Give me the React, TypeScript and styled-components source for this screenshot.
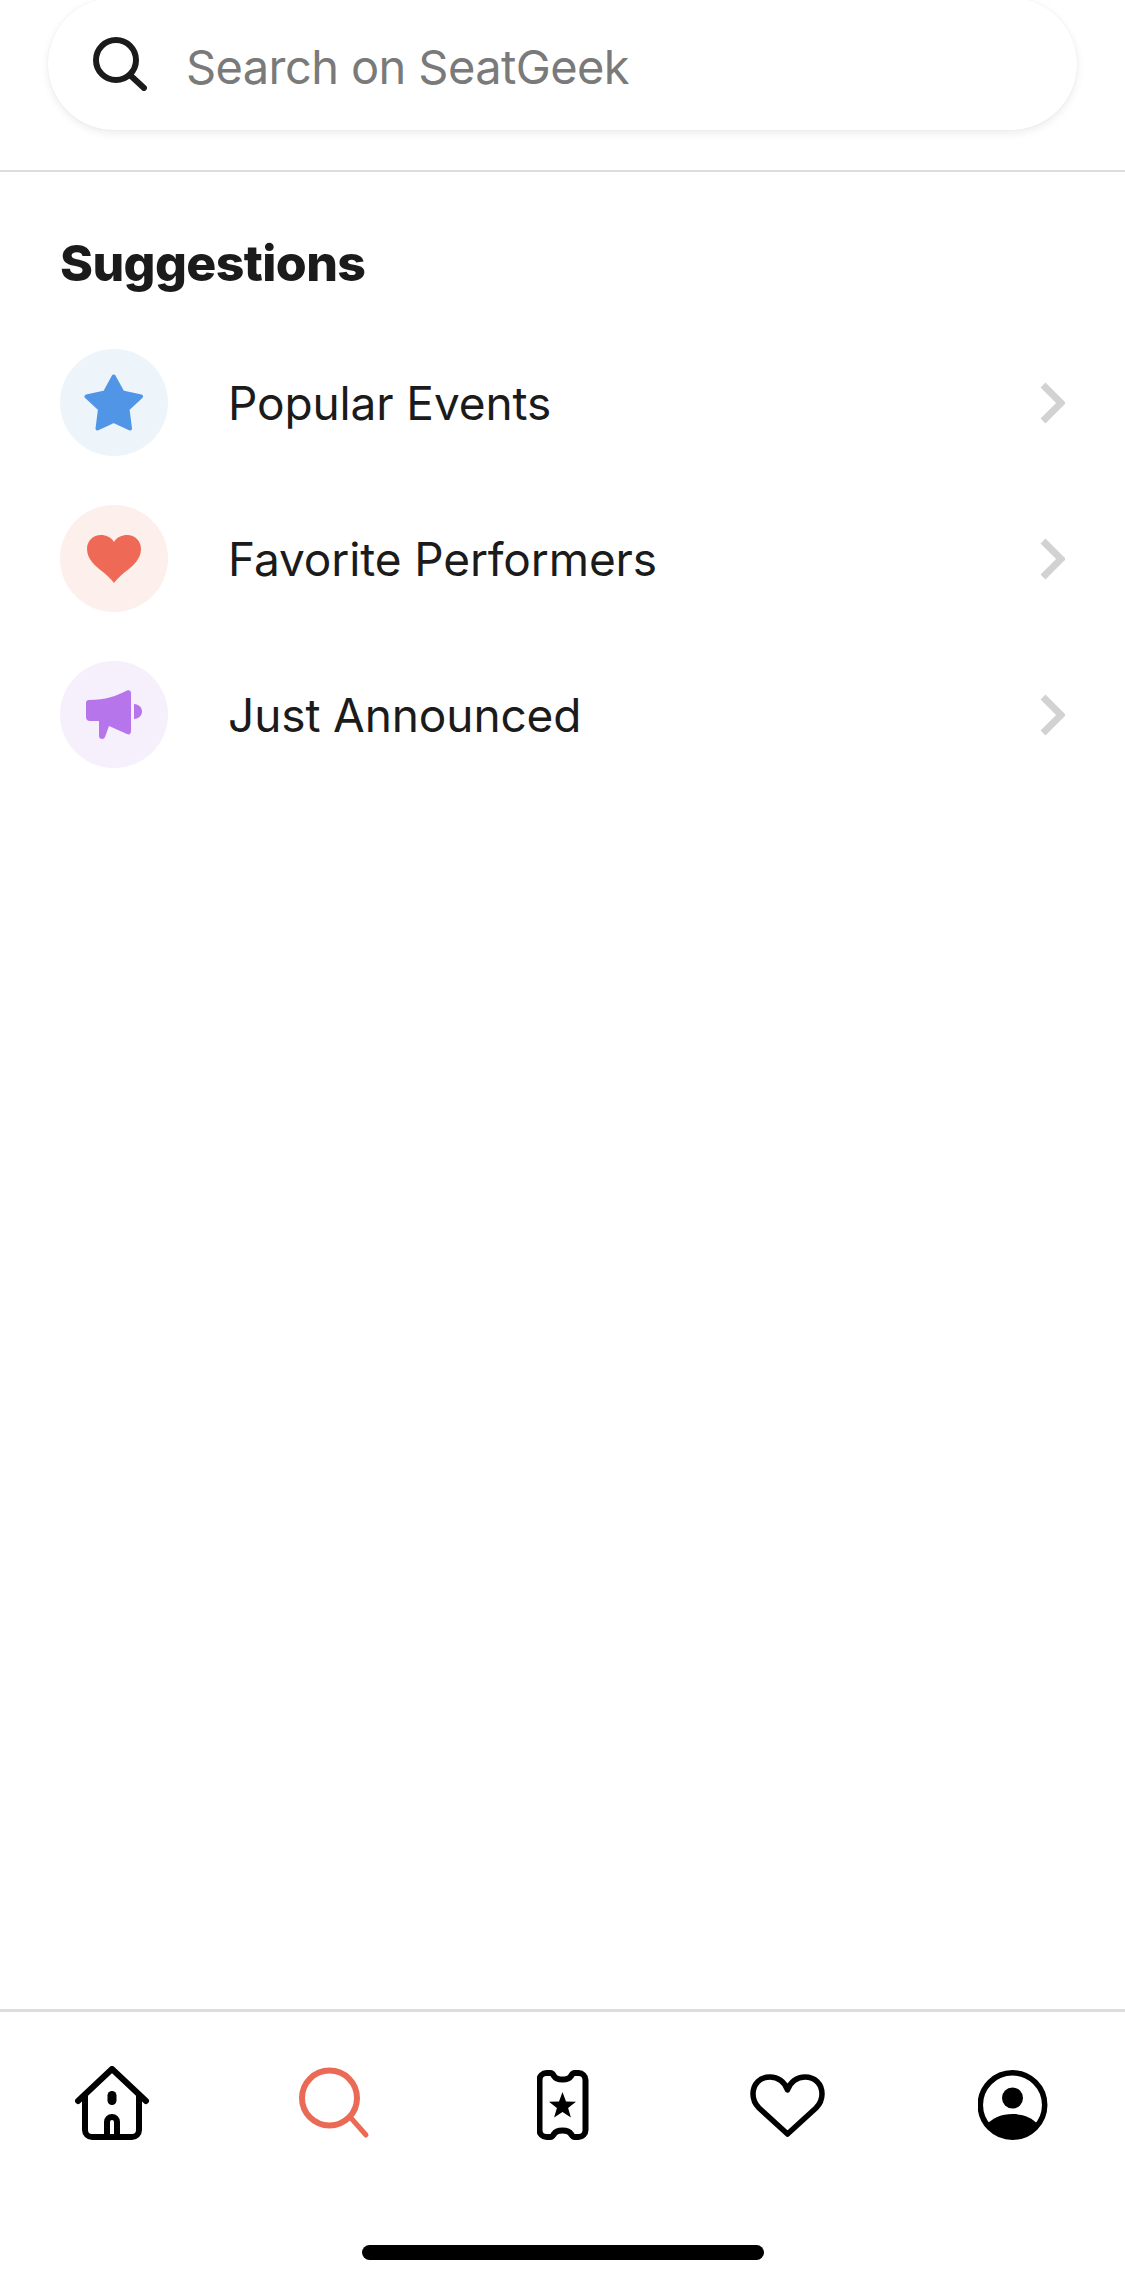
import React from 'react';
import styled, { createGlobalStyle } from 'styled-components';

const GlobalStyle = createGlobalStyle`
  html, body {
    margin: 0;
    padding: 0;
    background: #fff;
  }
`;

const Page = styled.div`
  width: 1125px;
  height: 2284px;
  display: flex;
  flex-direction: column;
  overflow: hidden;
  background: #fff;
  font-family: Inter, 'Liberation Sans', sans-serif;
  color: #1b1b1b;
`;

const SearchHeader = styled.header`
  height: 172px;
  flex-shrink: 0;
  box-sizing: border-box;
  padding: 0 48px;
  border-bottom: 2px solid #dcdcdc;
`;

const SearchBox = styled.div`
  height: 132px;
  margin-top: -2px;
  display: flex;
  align-items: center;
  gap: 39px;
  padding-left: 45px;
  border-radius: 66px;
  background: #fff;
  box-shadow: 0 3px 8px rgba(0, 0, 0, 0.08), 0 0 2px rgba(0, 0, 0, 0.06);
`;

const Placeholder = styled.span`
  margin-top: 5px;
  font-size: 47px;
  letter-spacing: -0.6px;
  color: #7a7a7a;
`;

const Main = styled.main`
  flex: 1;
  padding: 60px 60px 0;
`;

const Heading = styled.h2`
  margin: 0 0 55px;
  font-family: Inter, 'Liberation Sans', sans-serif;
  font-size: 50px;
  line-height: 62px;
  font-weight: 800;
  letter-spacing: -0.6px;
  color: #1b1b1b;
`;

const SuggestionList = styled.ul`
  list-style: none;
  margin: 0;
  padding: 0;
  display: flex;
  flex-direction: column;
  gap: 49px;
`;

const Row = styled.li`
  display: flex;
  align-items: center;
  height: 107px;
`;

const IconCircle = styled.div<{ $bg: string }>`
  width: 108px;
  height: 107px;
  flex-shrink: 0;
  display: flex;
  align-items: center;
  justify-content: center;
  border-radius: 50%;
  background: ${(p) => p.$bg};
`;

const Label = styled.span`
  flex: 1;
  margin-left: 60px;
  font-size: 46px;
  letter-spacing: -0.12px;
`;

const TabBar = styled.nav`
  flex-shrink: 0;
  border-top: 3px solid #dddddd;
  padding-top: 54px;
`;

const TabRow = styled.div`
  display: grid;
  grid-template-columns: repeat(5, 1fr);
`;

const Tab = styled.div`
  height: 76px;
  display: flex;
  justify-content: center;
`;

const HomeBarRow = styled.div`
  display: flex;
  justify-content: center;
  padding: 103px 0 24px;
`;

const HomeBar = styled.div`
  width: 402px;
  height: 15px;
  border-radius: 8px;
  background: #000;
`;

const StarIcon = () => (
  <svg width="60" height="57" viewBox="0 0 60 57">
    <path
      d="M29.7 2.5 L38.5 18.5 L57 22.5 L43.5 35 L46 54.5 L29.7 47 L13.5 54.5 L16 35 L2.5 22.5 L21 18.5 Z"
      fill="#5195e6"
      stroke="#5195e6"
      strokeWidth="4"
      strokeLinejoin="round"
    />
  </svg>
);

const HeartIcon = () => (
  <svg width="54" height="48" viewBox="0 0 54 48">
    <path
      d="M27 7 C24 2 19 0 14 0 C6 0 0 6 0 14 C0 24 8 31 16 37 C20 40 24 44 27 48 C30 44 34 40 38 37 C46 31 54 24 54 14 C54 6 48 0 40 0 C35 0 30 2 27 7 Z"
      fill="#ee6a56"
    />
  </svg>
);

const MegaphoneIcon = () => (
  <svg width="56" height="50" viewBox="0 0 56 50">
    <path
      d="M3 10 C20 10 30 6 41 0.5 C43.5 -0.5 45 1 45 3 V41 C45 44 43 45 41 44 L23 36 L19 47 C18 50 13 49.5 13 46 L13 31 H4 C1.5 31 0 29.5 0 27 V13 C0 11 1 10 3 10 Z"
      fill="#b675ea"
    />
    <path d="M48 14 C53 14 56 18 56 21.5 C56 25 53 29 48 29 Z" fill="#b675ea" />
  </svg>
);

const Chevron = () => (
  <svg width="25" height="42" viewBox="0 0 25 42">
    <path d="M3 3 L21 21 L3 39" fill="none" stroke="#d2d2d2" strokeWidth="7" />
  </svg>
);

const SearchGlyph = () => (
  <svg width="54" height="54" viewBox="0 0 54 54">
    <circle cx="23" cy="23" r="20" fill="none" stroke="#1b1b1b" strokeWidth="6" />
    <path d="M37 38 L51 51" stroke="#1b1b1b" strokeWidth="6" strokeLinecap="round" />
  </svg>
);

const HomeTab = () => (
  <svg width="76" height="76" viewBox="1 0 76 76">
    <g fill="none" stroke="#000" strokeWidth="6" strokeLinecap="round" strokeLinejoin="round">
      <path d="M4 35 L38 3 L72 35" />
      <path d="M11 29 V64 A7 7 0 0 0 18 71 H58 A7 7 0 0 0 65 64 V29" />
      <path d="M33 71 V56 A5 5 0 0 1 43 56 V71" />
    </g>
    <rect x="33.5" y="25" width="9" height="14" rx="4.5" fill="#000" />
  </svg>
);

const SearchTab = () => (
  <svg width="77" height="76" viewBox="0 -2 77 76">
    <circle cx="30.5" cy="30" r="27.5" fill="none" stroke="#ea6a55" strokeWidth="6" />
    <path d="M52 50 L67 67" stroke="#ea6a55" strokeWidth="5" strokeLinecap="round" />
  </svg>
);

const TicketTab = () => (
  <svg width="52" height="76" viewBox="0.5 -4 52 76">
    <path
      d="M10 3 H14 C16 3 16.5 4.5 17.5 6 C19 8.5 22 9.5 26 9.5 C30 9.5 33 8.5 34.5 6 C35.5 4.5 36 3 38 3 H42 A7 7 0 0 1 49 10 V60 A7 7 0 0 1 42 67 H38 C36 67 35.5 65.5 34.5 64 C33 61.5 30 60.5 26 60.5 C22 60.5 19 61.5 17.5 64 C16.5 65.5 16 67 14 67 H10 A7 7 0 0 1 3 60 V10 A7 7 0 0 1 10 3 Z"
      fill="none"
      stroke="#000"
      strokeWidth="6"
    />
    <polygon
      points="26,22 29.5,31.4 39.5,31.7 31.6,37.9 34.4,47.5 26,41.9 17.6,47.5 20.4,37.9 12.5,31.7 22.5,31.4"
      fill="#000"
    />
  </svg>
);

const HeartTab = () => (
  <svg width="75" height="76" viewBox="0 -8 75 76">
    <path
      d="M37.5 16 C35 8 28 3 20 3 C10 3 3 10 3 20 C3 27 6 31 9 34 L37.5 60 L66 34 C69 31 72 27 72 20 C72 10 65 3 55 3 C47 3 40 8 37.5 16 Z"
      fill="none"
      stroke="#000"
      strokeWidth="5.5"
      strokeLinejoin="round"
    />
  </svg>
);

const ProfileTab = () => (
  <svg width="70" height="76" viewBox="0.5 -4 70 76">
    <circle cx="35" cy="35" r="32.2" fill="none" stroke="#000" strokeWidth="5.5" />
    <circle cx="35" cy="28" r="10.5" fill="#000" />
    <path d="M10 54 C15 48 24 44 35 44 C46 44 55 48 60 54 A33 33 0 0 1 10 54 Z" fill="#000" />
  </svg>
);

const suggestions = [
  { id: 'popular', text: 'Popular Events', bg: '#edf4fa', icon: <StarIcon /> },
  { id: 'favorite', text: 'Favorite Performers', bg: '#fdefeb', icon: <HeartIcon /> },
  { id: 'announced', text: 'Just Announced', bg: '#f6effc', icon: <MegaphoneIcon /> },
];

const App: React.FC = () => (
  <Page>
    <GlobalStyle />
    <SearchHeader>
      <SearchBox>
        <SearchGlyph />
        <Placeholder>Search on SeatGeek</Placeholder>
      </SearchBox>
    </SearchHeader>

    <Main>
      <Heading>Suggestions</Heading>
      <SuggestionList>
        {suggestions.map((item) => (
          <Row key={item.id}>
            <IconCircle $bg={item.bg}>{item.icon}</IconCircle>
            <Label>{item.text}</Label>
            <Chevron />
          </Row>
        ))}
      </SuggestionList>
    </Main>

    <TabBar>
      <TabRow>
        <Tab><HomeTab /></Tab>
        <Tab><SearchTab /></Tab>
        <Tab><TicketTab /></Tab>
        <Tab><HeartTab /></Tab>
        <Tab><ProfileTab /></Tab>
      </TabRow>
      <HomeBarRow>
        <HomeBar />
      </HomeBarRow>
    </TabBar>
  </Page>
);

export default App;
